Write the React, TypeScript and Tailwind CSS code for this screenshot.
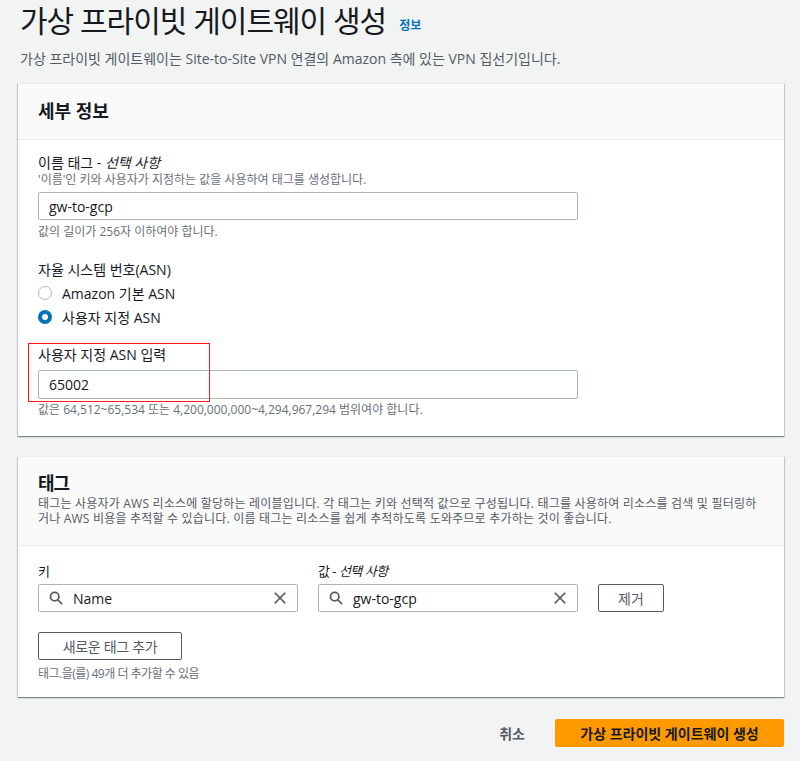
import React from "react";

const font = { fontFamily: '"Open Sans", "Noto Sans CJK KR", sans-serif' };

function SearchIcon() {
  return (
    <svg width="14" height="14" viewBox="0 0 16 16" fill="none" stroke="#545b64" strokeWidth="2">
      <circle cx="6.5" cy="6.5" r="4.8" />
      <path d="M10 10l4.5 4.5" strokeLinecap="round" />
    </svg>
  );
}

function ClearIcon() {
  return (
    <svg width="14" height="14" viewBox="0 0 16 16" fill="none" stroke="#545b64" strokeWidth="2">
      <path d="M2 2l12 12M14 2L2 14" />
    </svg>
  );
}

function Radio({ checked, label }: { checked?: boolean; label: string }) {
  return (
    <div className="flex items-center gap-[10px] h-6">
      {checked ? (
        <span className="w-[14px] h-[14px] rounded-full border-[4px] border-[#0073bb] bg-white" />
      ) : (
        <span className="w-[14px] h-[14px] rounded-full border border-[#aab7b8] bg-white" />
      )}
      <span className="text-[14px] text-[#16191f]">{label}</span>
    </div>
  );
}

function TagInput({ value }: { value: string }) {
  return (
    <div className="flex-1 h-[28px] border border-[#aab7b8] rounded-[2px] bg-white flex items-center pl-[10px] pr-[10px]">
      <SearchIcon />
      <span className="ml-[10px] flex-1 text-[14px] text-[#16191f]">{value}</span>
      <ClearIcon />
    </div>
  );
}

export default function App() {
  return (
    <div className="w-[800px] h-[761px] bg-[#f2f3f3] overflow-hidden pl-[18px] pr-[16px]" style={font}>
      <div className="flex items-end pl-[2px] h-[40px]">
        <h1 className="text-[30px] leading-[38px] text-[#16191f] tracking-[-1px]">가상 프라이빗 게이트웨이 생성</h1>
        <a className="ml-[13px] mb-[5px] text-[12px] font-bold text-[#0073bb]">정보</a>
      </div>
      <p className="pl-[2px] mt-[9px] text-[14px] leading-[20px] text-[#545b64]">
        가상 프라이빗 게이트웨이는 Site-to-Site VPN 연결의 Amazon 측에 있는 VPN 집선기입니다.
      </p>

      <section className="mt-[14px] bg-white border-t border-[#eaeded] shadow-[0_1px_1px_0_rgba(0,28,36,0.3),1px_1px_1px_0_rgba(0,28,36,0.15),-1px_1px_1px_0_rgba(0,28,36,0.15)]">
        <div className="h-[56px] bg-[#fafafa] border-b border-[#eaeded] flex items-center px-[20px]">
          <h2 className="text-[18px] font-bold text-[#16191f]">세부 정보</h2>
        </div>
        <div className="px-[20px] pt-[14px] pb-[18px]">
          <div className="text-[14px] leading-[18px] text-[#16191f]">
            이름 태그 - <i>선택 사항</i>
          </div>
          <div className="text-[12px] leading-[16px] text-[#687078]">'이름'인 키와 사용자가 지정하는 값을 사용하여 태그를 생성합니다.</div>
          <div className="mt-[4px] w-[540px] h-[28px] border border-[#aab7b8] rounded-[2px] flex items-center pl-[10px] text-[14px] text-[#16191f]">
            gw-to-gcp
          </div>
          <div className="mt-[4px] text-[12px] leading-[16px] text-[#687078]">값의 길이가 256자 이하여야 합니다.</div>

          <div className="mt-[20px] text-[14px] leading-[20px] text-[#16191f]">자율 시스템 번호(ASN)</div>
          <div className="mt-[1px] flex flex-col">
            <Radio label="Amazon 기본 ASN" />
            <Radio checked label="사용자 지정 ASN" />
          </div>

          <div className="mt-[16px] relative">
            <div className="absolute -left-[10px] -top-[2px] w-[182px] h-[59px] border-[1.5px] border-[#ff1a1a] pointer-events-none z-10" />
            <div className="text-[14px] leading-[20px] text-[#16191f]">사용자 지정 ASN 입력</div>
            <div className="mt-[5px] w-[540px] h-[29px] border border-[#aab7b8] rounded-[2px] flex items-center pl-[10px] text-[14px] text-[#16191f] bg-white">
              65002
            </div>
            <div className="mt-[3px] text-[12px] leading-[16px] text-[#687078]">
              값은 64,512~65,534 또는 4,200,000,000~4,294,967,294 범위여야 합니다.
            </div>
          </div>
        </div>
      </section>

      <section className="mt-[20px] bg-white border-t border-[#eaeded] shadow-[0_1px_1px_0_rgba(0,28,36,0.3),1px_1px_1px_0_rgba(0,28,36,0.15),-1px_1px_1px_0_rgba(0,28,36,0.15)]">
        <div className="h-[89px] bg-[#fafafa] border-b border-[#eaeded] px-[20px] pt-[14px]">
          <h2 className="text-[18px] leading-[24px] font-bold text-[#16191f] tracking-[-1px]">태그</h2>
          <p className="mt-[1px] text-[12px] leading-[15px] text-[#545b64] tracking-[0.2px]">
            태그는 사용자가 AWS 리소스에 할당하는 레이블입니다. 각 태그는 키와 선택적 값으로 구성됩니다. 태그를 사용하여 리소스를 검색 및 필터링하거나 AWS 비용을 추적할 수 있습니다. 이름 태그는 리소스를 쉽게 추적하도록 도와주므로 추가하는 것이 좋습니다.
          </p>
        </div>
        <div className="px-[20px] pt-[16px] pb-[15px]">
          <div className="flex gap-[20px] text-[13px] leading-[18px] text-[#16191f] tracking-[-0.5px]">
            <div className="w-[260px]">키</div>
            <div className="w-[260px]">
              값 - <i>선택 사항</i>
            </div>
          </div>
          <div className="mt-[4px] flex items-center gap-[20px]">
            <div className="w-[260px] flex">
              <TagInput value="Name" />
            </div>
            <div className="w-[260px] flex">
              <TagInput value="gw-to-gcp" />
            </div>
            <button className="w-[66px] h-[28px] border border-[#545b64] rounded-[2px] bg-white text-[14px] text-[#545b64]">
              제거
            </button>
          </div>
          <button className="mt-[20px] w-[144px] h-[28px] border border-[#545b64] rounded-[2px] bg-white text-[14px] text-[#545b64] tracking-[-0.3px]">
            새로운 태그 추가
          </button>
          <div className="mt-[6px] text-[12px] leading-[16px] text-[#687078] tracking-[-0.5px]">태그.을(를) 49개 더 추가할 수 있음</div>
        </div>
      </section>

      <div className="mt-[22px] flex justify-end items-center">
        <button className="px-[14px] h-[28px] text-[14px] font-bold text-[#545b64]">취소</button>
        <button className="ml-[16px] w-[229px] h-[28px] rounded-[2px] bg-[#ff9900] text-[14px] font-bold text-[#16191f]">
          가상 프라이빗 게이트웨이 생성
        </button>
      </div>
    </div>
  );
}
